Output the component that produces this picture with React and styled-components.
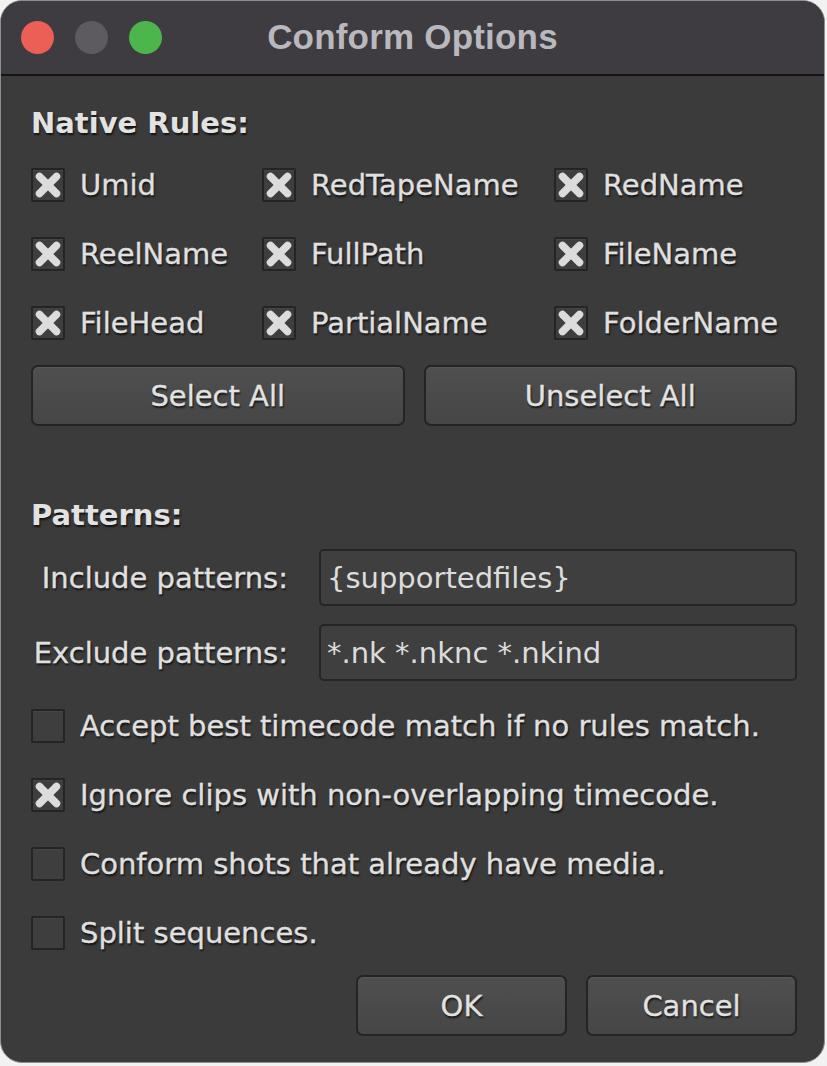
import React, { useState } from 'react';
import styled, { createGlobalStyle } from 'styled-components';

const GlobalStyle = createGlobalStyle`
  html, body {
    margin: 0;
    padding: 0;
    background: #f2f2f2;
  }
  * {
    box-sizing: border-box;
  }
`;

const Window = styled.div`
  width: 825px;
  height: 1063px;
  margin: 0;
  border: 1px solid #8e8e8e;
  border-radius: 22px;
  overflow: hidden;
  background: #3b3b3b;
  display: flex;
  flex-direction: column;
  font-family: "DejaVu Sans", Verdana, sans-serif;
  color: #dedede;
`;

const TitleBar = styled.div`
  height: 75px;
  flex-shrink: 0;
  background: #3e3b41;
  border-bottom: 2px solid #151515;
  display: flex;
  align-items: center;
  justify-content: center;
  position: relative;
`;

const Lights = styled.div`
  position: absolute;
  left: 20px;
  top: 20px;
  display: flex;
  gap: 21px;
`;

const Light = styled.span`
  width: 33px;
  height: 33px;
  border-radius: 50%;
  background: ${p => p.$color};
`;

const Title = styled.h1`
  margin: 0 0 2px 0;
  font-family: "Liberation Sans", Arial, sans-serif;
  font-weight: 700;
  font-size: 35px;
  color: #b9b8bd;
  letter-spacing: 0.2px;
`;

const Body = styled.div`
  flex: 1;
  padding: 32px 27px 0 30px;
  display: flex;
  flex-direction: column;
`;

const SectionTitle = styled.h2`
  margin: ${p => p.$top || 0}px 0 0 0;
  font-size: 29px;
  font-weight: 700;
  line-height: 30px;
  height: 30px;
  color: #e2e2e2;
  text-shadow: 1px 2px 2px rgba(0, 0, 0, 0.7);
`;

const RulesGrid = styled.div`
  margin-top: 12px;
  display: grid;
  grid-template-columns: 231px 292px 1fr;
  grid-auto-rows: 69px;
`;

const CheckRow = styled.label`
  display: flex;
  align-items: center;
  gap: 15px;
  height: 69px;
  font-size: 29px;
  color: #e0e0e0;
  -webkit-text-stroke: 0.3px #e0e0e0;
  text-shadow: 1px 2px 2px rgba(0, 0, 0, 0.75);
  white-space: nowrap;
  cursor: default;
`;

const Box = styled.span`
  width: 34px;
  height: 34px;
  flex-shrink: 0;
  border: 2px solid #242424;
  border-radius: 2px;
  background: #3e3e3e;
  box-shadow: inset 0 1px 0 rgba(255, 255, 255, 0.04);
  display: flex;
  align-items: center;
  justify-content: center;
`;

const ButtonRow = styled.div`
  margin-top: ${p => p.$top || 0}px;
  display: flex;
  justify-content: ${p => (p.$end ? 'flex-end' : 'stretch')};
  gap: 19px;
`;

const Button = styled.button`
  flex: ${p => (p.$fixed ? '0 0 211px' : '1')};
  height: 61px;
  border: 2px solid #242424;
  border-radius: 7px;
  background: linear-gradient(#4f4f4f, #464646);
  box-shadow: inset 0 1px 0 rgba(255, 255, 255, 0.06);
  font-family: "DejaVu Sans", Verdana, sans-serif;
  font-size: 29px;
  color: #e2e2e2;
  -webkit-text-stroke: 0.3px #e2e2e2;
  text-shadow: 1px 2px 2px rgba(0, 0, 0, 0.75);
  padding: 0;
  cursor: default;
`;

const FieldRow = styled.div`
  margin-top: ${p => p.$top}px;
  display: grid;
  grid-template-columns: 257px 1fr;
  gap: 31px;
  align-items: center;
`;

const FieldLabel = styled.span`
  text-align: right;
  font-size: 29px;
  color: #e0e0e0;
  -webkit-text-stroke: 0.3px #e0e0e0;
  text-shadow: 1px 2px 2px rgba(0, 0, 0, 0.75);
  white-space: nowrap;
`;

const Input = styled.input`
  height: 57px;
  border: 2px solid #252525;
  border-radius: 5px;
  background: #3f3f3f;
  padding: 0 6px;
  font-family: "DejaVu Sans", Verdana, sans-serif;
  font-size: 29px;
  color: #dcdcdc;
  outline: none;
  width: 100%;
`;

const OptionList = styled.div`
  margin-top: 10px;
  display: flex;
  flex-direction: column;
`;

const Cross = () => (
  <svg width="30" height="30" viewBox="0 0 30 30">
    <g stroke="#dcdcdc" strokeWidth="7.5" strokeLinecap="round">
      <line x1="6.5" y1="6.5" x2="23.5" y2="23.5" />
      <line x1="23.5" y1="6.5" x2="6.5" y2="23.5" />
    </g>
  </svg>
);

const Checkbox = ({ label, checked, onToggle }) => (
  <CheckRow onClick={onToggle}>
    <Box>{checked && <Cross />}</Box>
    {label}
  </CheckRow>
);

const ruleNames = [
  'Umid', 'RedTapeName', 'RedName',
  'ReelName', 'FullPath', 'FileName',
  'FileHead', 'PartialName', 'FolderName',
];

const optionNames = [
  'Accept best timecode match if no rules match.',
  'Ignore clips with non-overlapping timecode.',
  'Conform shots that already have media.',
  'Split sequences.',
];

export default function App() {
  const [rules, setRules] = useState(() => ruleNames.map(() => true));
  const [options, setOptions] = useState([false, true, false, false]);
  const [include, setInclude] = useState('{supportedfiles}');
  const [exclude, setExclude] = useState('*.nk *.nknc *.nkind');

  const toggleRule = i => setRules(r => r.map((v, j) => (j === i ? !v : v)));
  const toggleOption = i => setOptions(o => o.map((v, j) => (j === i ? !v : v)));

  return (
    <>
      <GlobalStyle />
      <Window>
        <TitleBar>
          <Lights>
            <Light $color="#ec5f57" />
            <Light $color="#5d5b60" />
            <Light $color="#4cb64d" />
          </Lights>
          <Title>Conform Options</Title>
        </TitleBar>
        <Body>
          <SectionTitle>Native Rules:</SectionTitle>
          <RulesGrid>
            {ruleNames.map((name, i) => (
              <Checkbox key={name} label={name} checked={rules[i]} onToggle={() => toggleRule(i)} />
            ))}
          </RulesGrid>
          <ButtonRow $top={8}>
            <Button onClick={() => setRules(ruleNames.map(() => true))}>Select All</Button>
            <Button onClick={() => setRules(ruleNames.map(() => false))}>Unselect All</Button>
          </ButtonRow>

          <SectionTitle $top={74}>Patterns:</SectionTitle>
          <FieldRow $top={19}>
            <FieldLabel>Include patterns:</FieldLabel>
            <Input value={include} onChange={e => setInclude(e.target.value)} />
          </FieldRow>
          <FieldRow $top={18}>
            <FieldLabel>Exclude patterns:</FieldLabel>
            <Input value={exclude} onChange={e => setExclude(e.target.value)} />
          </FieldRow>

          <OptionList>
            {optionNames.map((name, i) => (
              <Checkbox key={name} label={name} checked={options[i]} onToggle={() => toggleOption(i)} />
            ))}
          </OptionList>

          <ButtonRow $top={8} $end>
            <Button $fixed>OK</Button>
            <Button $fixed>Cancel</Button>
          </ButtonRow>
        </Body>
      </Window>
    </>
  );
}
